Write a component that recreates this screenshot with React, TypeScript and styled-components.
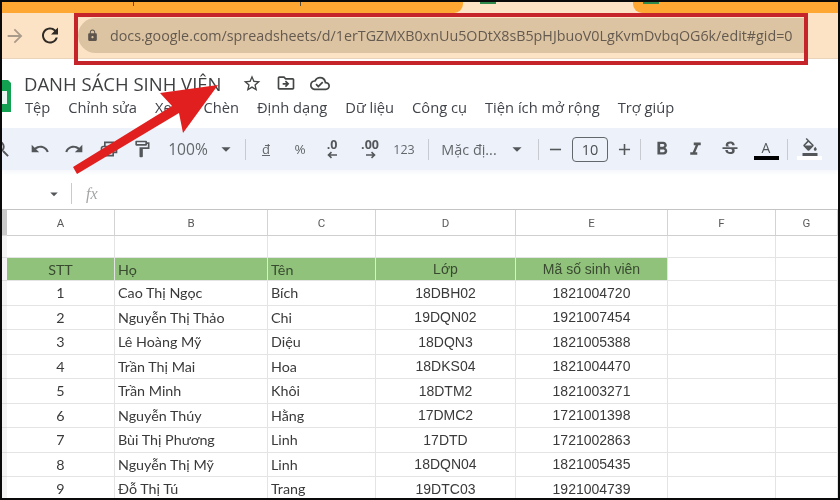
import React from "react";
import styled, { createGlobalStyle } from "styled-components";
import {
  MdArrowForward, MdRefresh, MdLock, MdStarBorder, MdOutlineDriveFileMove, MdOutlineCloudDone,
  MdSearch, MdUndo, MdRedo, MdOutlinePrint, MdOutlineFormatPaint, MdArrowDropDown,
  MdRemove, MdAdd, MdFormatBold, MdFormatItalic, MdStrikethroughS, MdFormatColorFill,
} from "react-icons/md";

const Global = createGlobalStyle`
  html, body { margin: 0; padding: 0; background: #000; }
  #root { width: 840px; height: 500px; overflow: hidden; }
`;

const Frame = styled.div`
  position: relative;
  width: 840px;
  height: 500px;
  box-sizing: border-box;
  padding: 2px;
  background: #0a0a0a;
  overflow: hidden;
  font-family: "Open Sans", sans-serif;
  filter: blur(0.35px);
`;

const Page = styled.div`
  height: 100%;
  display: flex;
  flex-direction: column;
  background: #fff;
  overflow: hidden;
`;

const TabStrip = styled.div`
  height: 11px;
  flex: none;
  display: flex;
  background: #fde3c5;
`;

const OrangeLeft = styled.div`
  width: 461px;
  height: 11px;
  flex: none;
  display: flex;
  gap: 166px;
  padding-left: 131px;
  box-sizing: border-box;
  background: #ffa733;
  border-radius: 0 0 9px 0;
`;

const Tick = styled.span`
  width: 1px;
  height: 4px;
  background: #5b4a33;
`;

const ActiveTab = styled.div`
  width: 170px;
  flex: none;
  height: 11px;
  display: flex;
  padding-left: 17px;
  box-sizing: border-box;
`;

const TabMark = styled.div`
  width: 16px;
  height: 2px;
  background: #2f8a4b;
`;

const OrangeRight = styled.div`
  flex: 1;
  height: 11px;
  padding-left: 10px;
  box-sizing: border-box;
  background: #ffa733;
  border-radius: 0 0 0 9px;
`;

const BrowserBar = styled.div`
  height: 45px;
  flex: none;
  display: flex;
  align-items: center;
  padding: 0 34px 0 1px;
  gap: 11px;
  background: #fde3c5;
  border-bottom: 1px solid #e9d3bb;
`;

const NavIcon = styled.span<{ $c: string }>`
  display: flex;
  width: 24px;
  justify-content: center;
  color: ${(p) => p.$c};
`;

const AddressPill = styled.div`
  flex: 1;
  height: 35px;
  margin-left: 5px;
  border-radius: 18px 0 0 18px;
  background: #dcc4a2;
  display: flex;
  align-items: center;
  padding-left: 8px;
  gap: 11px;
  color: #5d554d;
`;

const UrlText = styled.span`
  font-size: 14.3px;
  color: #645a50;
  white-space: nowrap;
`;

const Header = styled.div`
  height: 69px;
  flex: none;
  display: flex;
  gap: 13px;
  box-sizing: border-box;
  padding-top: 12px;
`;

const LogoSvg = styled.svg`
  width: 9px;
  height: 32px;
  flex: none;
  margin-top: 9px;
`;

const HeaderText = styled.div`
  display: flex;
  flex-direction: column;
  gap: 1px;
`;

const TitleRow = styled.div`
  display: flex;
  align-items: center;
  height: 24px;
  color: #444746;
`;

const Title = styled.span`
  font-size: 18.5px;
  color: #3d3f41;
  white-space: nowrap;
  width: 218px;
`;

const TitleIcon = styled.span`
  display: flex;
  width: 20px;
  margin-right: 14px;
  justify-content: center;
`;

const Menu = styled.nav`
  display: flex;
  gap: 18px;
  padding-left: 1px;
`;

const MenuItem = styled.span`
  font-size: 14.7px;
  line-height: 22px;
  color: #41444a;
  white-space: nowrap;
`;

const Toolbar = styled.div`
  height: 42px;
  flex: none;
  display: flex;
  align-items: center;
  background: #edf2fa;
  color: #54575a;
  box-shadow: 0 3px 4px #f6f8fb;
  overflow: hidden;
`;

const ToolIcon = styled.span<{ $w: number; $ml?: number }>`
  display: flex;
  flex: none;
  width: ${(p) => p.$w}px;
  margin-left: ${(p) => p.$ml ?? 0}px;
  justify-content: center;
  align-items: center;

  svg {
    flex: none;
  }
`;

const ToolLabel = styled.span<{ $w: number; $size?: number }>`
  flex: none;
  width: ${(p) => p.$w}px;
  text-align: center;
  font-size: ${(p) => p.$size ?? 15}px;
  white-space: nowrap;
  color: #63666a;
`;

const Sep = styled.span<{ $ml?: number }>`
  flex: none;
  width: 1px;
  height: 21px;
  margin-left: ${(p) => p.$ml ?? 0}px;
  background: #c7cbd1;
`;

const SizeBox = styled.span`
  flex: none;
  width: 36px;
  height: 25px;
  box-sizing: border-box;
  border: 1px solid #63666a;
  border-radius: 4px;
  display: flex;
  align-items: center;
  justify-content: center;
  font-size: 14.5px;
  color: #4c4f52;
`;

const DecimalTool = styled.span<{ $w: number }>`
  flex: none;
  width: ${(p) => p.$w}px;
  display: flex;
  flex-direction: column;
  align-items: center;
  font-size: 12.5px;
  font-weight: 700;
  line-height: 12px;
  color: #54575a;
`;

const ColorTool = styled.span<{ $w: number }>`
  flex: none;
  width: ${(p) => p.$w}px;
  display: flex;
  flex-direction: column;
  align-items: center;
  font-size: 14px;
  line-height: 17px;
  color: #54575a;
`;

const ColorBar = styled.span<{ $c: string }>`
  width: 25px;
  height: 4px;
  background: ${(p) => p.$c};
`;

const FormulaBar = styled.div`
  height: 39px;
  flex: none;
  box-sizing: border-box;
  padding: 8px 0 0 43px;
  display: flex;
  align-items: center;
  color: #54575a;
`;

const FxLabel = styled.span`
  font-family: "Liberation Serif", serif;
  font-style: italic;
  font-size: 16px;
  color: #a3a5a7;
  margin-left: 14px;
`;

const SheetGrid = styled.div`
  flex: 1;
  min-height: 0;
  display: grid;
  grid-template-columns: 5px 108px 153px 108px 140px 152px 108px 1fr;
  grid-template-rows: 26px 22px 23px repeat(9, 24.5px);
  border-top: 1.5px solid #c4c4c4;
  overflow: hidden;
`;

const Cell = styled.div<{
  $align?: "left" | "center";
  $font?: "calibri" | "arial" | "head";
  $head?: boolean;
  $fill?: boolean;
}>`
  box-sizing: border-box;
  display: flex;
  align-items: center;
  min-width: 0;
  overflow: hidden;
  white-space: nowrap;
  justify-content: ${(p) => (p.$align === "center" ? "center" : "flex-start")};
  padding-left: ${(p) => (p.$align === "center" ? 0 : 3)}px;
  border-right: 1px solid ${(p) => (p.$head ? "#d3d3d3" : "#e4e4e4")};
  border-bottom: 1px solid ${(p) => (p.$head ? "#cfcfcf" : "#e4e4e4")};
  background: ${(p) => (p.$fill ? "#90c27c" : "#fff")};
  font-family: ${(p) =>
    p.$font === "arial" ? '"Liberation Sans", sans-serif' : p.$font === "head" ? "Roboto, sans-serif" : "Lato, sans-serif"};
  font-size: ${(p) => (p.$font === "arial" ? 14 : p.$font === "head" ? 11.5 : 14.3)}px;
  color: ${(p) => (p.$fill ? "#394a30" : p.$head ? "#5a5a5a" : "#3a3a3a")};
`;

const Corner = styled.div<{ $grey?: boolean }>`
  background: ${(p) => (p.$grey ? "#c9c9c9" : "#f4f4f4")};
  border-bottom: 1px solid #dcdcdc;
`;

const AddressOutline = styled.div`
  position: absolute;
  left: 74px;
  top: 13px;
  width: 734px;
  height: 52px;
  box-sizing: border-box;
  border: 4px solid #c4242a;
  pointer-events: none;
`;

const ArrowSvg = styled.svg`
  position: absolute;
  left: 0;
  top: 0;
  width: 840px;
  height: 500px;
  pointer-events: none;
`;

const DecimalArrow = ({ dir }: { dir: "left" | "right" }) => (
  <svg width="11" height="8" viewBox="0 0 11 8">
    <path
      d={dir === "left" ? "M10 4H2M4.5 1.2 1.5 4l3 2.8" : "M1 4h8M6.5 1.2 9.5 4l-3 2.8"}
      fill="none"
      stroke="#54575a"
      strokeWidth="1.6"
    />
  </svg>
);

const ROWS = [
  ["1", "Cao Thị Ngọc", "Bích", "18DBH02", "1821004720"],
  ["2", "Nguyễn Thị Thảo", "Chi", "19DQN02", "1921007454"],
  ["3", "Lê Hoàng Mỹ", "Diệu", "18DQN3", "1821005388"],
  ["4", "Trần Thị Mai", "Hoa", "18DKS04", "1821004470"],
  ["5", "Trần Minh", "Khôi", "18DTM2", "1821003271"],
  ["6", "Nguyễn Thúy", "Hằng", "17DMC2", "1721001398"],
  ["7", "Bùi Thị Phương", "Linh", "17DTD", "1721002863"],
  ["8", "Nguyễn Thị Mỹ", "Linh", "18DQN04", "1821005435"],
  ["9", "Đỗ Thị Tú", "Trang", "19DTC03", "1921004739"],
];

const MENU = ["Tệp", "Chỉnh sửa", "Xem", "Chèn", "Định dạng", "Dữ liệu", "Công cụ", "Tiện ích mở rộng", "Trợ giúp"];
const COLS = ["A", "B", "C", "D", "E", "F", "G"];

export default function App() {
  return (
    <Frame>
      <Global />
      <Page>
        <TabStrip>
          <OrangeLeft>
            <Tick />
            <Tick />
          </OrangeLeft>
          <ActiveTab>
            <TabMark />
          </ActiveTab>
          <OrangeRight>
            <TabMark />
          </OrangeRight>
        </TabStrip>
        <BrowserBar>
          <NavIcon $c="#a99a8a"><MdArrowForward size={22} /></NavIcon>
          <NavIcon $c="#2f2a25"><MdRefresh size={25} /></NavIcon>
          <AddressPill>
            <MdLock size={13} />
            <UrlText>docs.google.com/spreadsheets/d/1erTGZMXB0xnUu5ODtX8sB5pHJbuoV0LgKvmDvbqOG6k/edit#gid=0</UrlText>
          </AddressPill>
        </BrowserBar>
        <Header>
          <LogoSvg viewBox="0 0 9 32">
            <path d="M0 0h6l3 3v29H0z" fill="#12a150" />
            <rect x="0" y="11" width="5" height="13" fill="#fff" opacity="0.9" />
          </LogoSvg>
          <HeaderText>
            <TitleRow>
              <Title>DANH SÁCH SINH VIÊN</Title>
              <TitleIcon><MdStarBorder size={21} /></TitleIcon>
              <TitleIcon><MdOutlineDriveFileMove size={20} /></TitleIcon>
              <TitleIcon><MdOutlineCloudDone size={21} /></TitleIcon>
            </TitleRow>
            <Menu>
              {MENU.map((m) => <MenuItem key={m}>{m}</MenuItem>)}
            </Menu>
          </HeaderText>
        </Header>
        <Toolbar>
          <ToolIcon $w={16} $ml={-9}><MdSearch size={22} /></ToolIcon>
          <ToolIcon $w={34} $ml={14}><MdUndo size={20} /></ToolIcon>
          <ToolIcon $w={34}><MdRedo size={20} /></ToolIcon>
          <ToolIcon $w={36}><MdOutlinePrint size={20} /></ToolIcon>
          <ToolIcon $w={30}><MdOutlineFormatPaint size={20} /></ToolIcon>
          <ToolLabel $w={62} $size={15.6}>100%</ToolLabel>
          <ToolIcon $w={14}><MdArrowDropDown size={22} /></ToolIcon>
          <Sep $ml={12} />
          <ToolLabel $w={40} $size={13}><u>đ</u></ToolLabel>
          <ToolLabel $w={28} $size={13.5}>%</ToolLabel>
          <DecimalTool $w={36}><span>.0</span><DecimalArrow dir="left" /></DecimalTool>
          <DecimalTool $w={40}><span>.00</span><DecimalArrow dir="right" /></DecimalTool>
          <ToolLabel $w={28} $size={12.5}>123</ToolLabel>
          <Sep $ml={10} />
          <ToolLabel $w={80} $size={14.4}>Mặc đị...</ToolLabel>
          <ToolIcon $w={16}><MdArrowDropDown size={22} /></ToolIcon>
          <Sep $ml={13} />
          <ToolIcon $w={33}><MdRemove size={19} /></ToolIcon>
          <SizeBox>10</SizeBox>
          <ToolIcon $w={32}><MdAdd size={19} /></ToolIcon>
          <Sep />
          <ToolIcon $w={41}><MdFormatBold size={22} /></ToolIcon>
          <ToolIcon $w={26}><MdFormatItalic size={21} /></ToolIcon>
          <ToolIcon $w={44}><MdStrikethroughS size={20} /></ToolIcon>
          <ColorTool $w={28}>A<ColorBar $c="#000" /></ColorTool>
          <ToolIcon $w={7} />
          <Sep />
          <ColorTool $w={43}><MdFormatColorFill size={18} /><ColorBar $c="#fff" /></ColorTool>
        </Toolbar>
        <FormulaBar>
          <MdArrowDropDown size={18} />
          <Sep $ml={8} />
          <FxLabel>fx</FxLabel>
        </FormulaBar>
        <SheetGrid>
          <Corner $grey />
          {COLS.map((c) => <Cell key={c} $head $align="center" $font="head">{c}</Cell>)}
          <Corner />
          {COLS.map((c) => <Cell key={c} />)}
          <Corner />
          <Cell $fill $align="center">STT</Cell>
          <Cell $fill>Họ</Cell>
          <Cell $fill>Tên</Cell>
          <Cell $fill $align="center" $font="arial">Lớp</Cell>
          <Cell $fill $align="center" $font="arial">Mã số sinh viên</Cell>
          <Cell />
          <Cell />
          {ROWS.map((r) => (
            <React.Fragment key={r[0]}>
              <Corner />
              <Cell $align="center">{r[0]}</Cell>
              <Cell>{r[1]}</Cell>
              <Cell>{r[2]}</Cell>
              <Cell $align="center" $font="arial">{r[3]}</Cell>
              <Cell $align="center" $font="arial">{r[4]}</Cell>
              <Cell />
              <Cell />
            </React.Fragment>
          ))}
        </SheetGrid>
      </Page>
      <AddressOutline />
      <ArrowSvg viewBox="0 0 840 500">
        <polygon points="218,85 160,93 172,106 73,167 77,174 179,113 183,133" fill="#e21f1f" />
      </ArrowSvg>
    </Frame>
  );
}
